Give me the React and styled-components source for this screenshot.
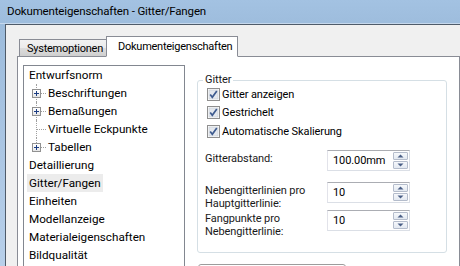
import React from 'react';
import styled, { createGlobalStyle } from 'styled-components';

const GlobalStyle = createGlobalStyle`
  *, *::before, *::after {
    box-sizing: border-box;
  }
  html, body {
    margin: 0;
    padding: 0;
    background: #a4c2e2;
  }
  body {
    font-family: Roboto, "Noto Sans", sans-serif;
    font-size: 11.5px;
    color: #000;
  }
`;

const Window = styled.div`
  display: flex;
  flex-direction: column;
  width: 460px;
  height: 266px;
  overflow: hidden;
  background: linear-gradient(180deg, #a3c2e2 0%, #9dbcdc 10%, #b8d0ea 100%);
`;

const TitleBar = styled.div`
  display: flex;
  align-items: center;
  flex-shrink: 0;
  height: 24px;
  padding: 0 0 1px 7px;
  font-size: 11.5px;
  letter-spacing: -0.15px;
  color: #000;
  border-bottom: 1px solid #c6d8ec;
`;

const Client = styled.div`
  flex: 1;
  display: flex;
  flex-direction: column;
  margin-left: 5px;
  padding: 11px 0 0 11px;
  background: #f0f0f0;
  border-top: 1px solid #4f5b69;
  border-left: 1px solid #4f5b69;
`;

const TabStrip = styled.div`
  display: flex;
  align-items: flex-end;
  padding-left: 2px;
  position: relative;
  z-index: 1;
  margin-bottom: -1px;
`;

const Tab = styled.div`
  display: flex;
  align-items: center;
  width: ${(p) => (p.$active ? '132px' : '88px')};
  height: ${(p) => (p.$active ? '21px' : '18px')};
  padding: ${(p) => (p.$active ? '0 0 0 11px' : '1px 0 0 7px')};
  margin-left: ${(p) => (p.$active ? '-1px' : '0')};
  border: 1px solid #898c95;
  border-bottom: ${(p) => (p.$active ? '1px solid #fff' : '1px solid #898c95')};
  background: ${(p) =>
    p.$active ? '#fff' : 'linear-gradient(180deg, #f2f2f2 0%, #ebebeb 50%, #dddddd 51%, #cfcfcf 100%)'};
  font-size: 11px;
  letter-spacing: -0.25px;
  white-space: nowrap;
`;

const TabPage = styled.div`
  flex: 1;
  display: flex;
  align-items: flex-start;
  background: #fff;
  border: 1px solid #898c95;
  padding: 8px 0 0 5px;
`;

const TreeBox = styled.div`
  width: 162px;
  height: 220px;
  flex-shrink: 0;
  border: 1px solid #828790;
  font-size: 11.7px;
`;

const TreeRow = styled.div`
  position: relative;
  display: flex;
  align-items: center;
  height: 18px;
  padding-left: ${(p) => (p.$child ? '24px' : '5px')};
`;

const TreeLabel = styled.span`
  display: inline-flex;
  align-items: center;
  height: 18px;
  padding: 0 ${(p) => (p.$selected ? '2px' : '0')};
  margin-left: ${(p) => (p.$selected ? '-2px' : '0')};
  background: ${(p) => (p.$selected ? '#ececec' : 'transparent')};
  white-space: nowrap;
`;

const BranchV = styled.span`
  position: absolute;
  left: 12px;
  top: 0;
  height: ${(p) => (p.$last ? '9px' : '18px')};
  border-left: 1px dotted #a0a0a0;
`;

const BranchH = styled.span`
  position: absolute;
  left: 13px;
  top: 9px;
  width: 9px;
  border-top: 1px dotted #a0a0a0;
`;

const Expander = styled.span`
  position: absolute;
  left: 8px;
  top: 5px;
  width: 9px;
  height: 9px;
  border: 1px solid #919191;
  background: linear-gradient(180deg, #ffffff 0%, #e6e6e6 100%);
  display: flex;
  align-items: center;
  justify-content: center;
  &::before,
  &::after {
    content: '';
    position: absolute;
    background: #1c3d82;
  }
  &::before {
    width: 5px;
    height: 1px;
  }
  &::after {
    width: 1px;
    height: 5px;
  }
`;

const Settings = styled.div`
  display: flex;
  flex-direction: column;
  margin-left: 12px;
  padding-top: 10px;
  width: 250px;
  flex-shrink: 0;
  font-size: 11px;
  letter-spacing: -0.1px;
`;

const Group = styled.fieldset`
  margin: 0;
  padding: 0 0 14px 5px;
  border: 1px solid #d5dfe5;
  border-radius: 3px;
  display: flex;
  flex-direction: column;
`;

const Legend = styled.legend`
  padding: 0 2px;
  line-height: 10px;
  color: #1a1a1a;
`;

const CheckRow = styled.label`
  display: flex;
  align-items: center;
  height: 18.5px;
  padding-left: 4px;
  gap: 2px;
`;

const CheckBoxMark = styled.span`
  width: 13px;
  height: 13px;
  flex-shrink: 0;
  display: flex;
`;

const FieldRow = styled.div`
  display: flex;
  align-items: flex-start;
  height: ${(p) => p.$h}px;
  margin-top: ${(p) => p.$mt}px;
  padding-left: 2px;
`;

const FieldLabel = styled.div`
  width: 122px;
  flex-shrink: 0;
  line-height: 13.5px;
  padding-top: 2px;
  color: #1a1a1a;
  white-space: nowrap;
`;

const SpinBox = styled.div`
  display: flex;
  align-items: center;
  justify-content: space-between;
  width: 83px;
  height: 21px;
  border: 1px solid #dbdfe6;
  border-top-color: #abadb3;
  border-left-color: #e2e3ea;
  background: #fff;
  padding: 0 1px 0 5px;
`;

const SpinButtons = styled.div`
  display: flex;
  flex-direction: column;
  gap: 1px;
  width: 15px;
`;

const SpinButton = styled.div`
  height: 8px;
  display: flex;
  align-items: center;
  justify-content: center;
  border: 1px solid #b4bccb;
  border-radius: 1px;
  background: linear-gradient(180deg, #f6f8fb 0%, #e3e9f1 100%);
`;

const BottomBox = styled.div`
  margin-top: 11px;
  margin-left: 1px;
  width: 148px;
  height: 30px;
  border: 1px solid #9c9c9c;
  border-radius: 3px;
  background: #fff;
`;

const Check = () => (
  <CheckBoxMark>
    <svg width="13" height="13" viewBox="0 0 13 13">
      <rect x="0.5" y="0.5" width="12" height="12" fill="#fff" stroke="#8f8f8f" />
      <rect x="2" y="2" width="9" height="9" fill="#e4e8ee" stroke="#c4c9d2" strokeWidth="0.6" />
      <path d="M3.2 6.4 L5.3 9.2 L9.8 2.9" fill="none" stroke="#3e5b8f" strokeWidth="1.7" />
    </svg>
  </CheckBoxMark>
);

const Arrow = ({ up }) => (
  <svg width="7" height="4" viewBox="0 0 7 4">
    <path d={up ? 'M0.5 3.5 L3.5 0.5 L6.5 3.5 Z' : 'M0.5 0.5 L3.5 3.5 L6.5 0.5 Z'} fill="#4a5f86" />
  </svg>
);

const Spin = ({ value }) => (
  <SpinBox>
    <span>{value}</span>
    <SpinButtons>
      <SpinButton>
        <Arrow up />
      </SpinButton>
      <SpinButton>
        <Arrow />
      </SpinButton>
    </SpinButtons>
  </SpinBox>
);

const tree = [
  { label: 'Entwurfsnorm' },
  { label: 'Beschriftungen', child: true, plus: true },
  { label: 'Bemaßungen', child: true, plus: true },
  { label: 'Virtuelle Eckpunkte', child: true },
  { label: 'Tabellen', child: true, plus: true, last: true },
  { label: 'Detaillierung' },
  { label: 'Gitter/Fangen', selected: true },
  { label: 'Einheiten' },
  { label: 'Modellanzeige' },
  { label: 'Materialeigenschaften' },
  { label: 'Bildqualität' },
];

export default function App() {
  return (
    <>
      <GlobalStyle />
      <Window>
        <TitleBar>Dokumenteigenschaften - Gitter/Fangen</TitleBar>
        <Client>
          <TabStrip>
            <Tab>Systemoptionen</Tab>
            <Tab $active>Dokumenteigenschaften</Tab>
          </TabStrip>
          <TabPage>
            <TreeBox>
              {tree.map((item) => (
                <TreeRow key={item.label} $child={item.child}>
                  {item.child && <BranchV $last={item.last} />}
                  {item.child && <BranchH />}
                  {item.plus && <Expander />}
                  <TreeLabel $selected={item.selected}>{item.label}</TreeLabel>
                </TreeRow>
              ))}
            </TreeBox>
            <Settings>
              <Group>
                <Legend>Gitter</Legend>
                <CheckRow>
                  <Check />
                  Gitter anzeigen
                </CheckRow>
                <CheckRow>
                  <Check />
                  Gestrichelt
                </CheckRow>
                <CheckRow>
                  <Check />
                  Automatische Skalierung
                </CheckRow>
                <FieldRow $h={21} $mt={9}>
                  <FieldLabel>Gitterabstand:</FieldLabel>
                  <Spin value="100.00mm" />
                </FieldRow>
                <FieldRow $h={28} $mt={11}>
                  <FieldLabel>
                    Nebengitterlinien pro
                    <br />
                    Hauptgitterlinie:
                  </FieldLabel>
                  <Spin value="10" />
                </FieldRow>
                <FieldRow $h={28} $mt={0}>
                  <FieldLabel>
                    Fangpunkte pro
                    <br />
                    Nebengitterlinie:
                  </FieldLabel>
                  <Spin value="10" />
                </FieldRow>
              </Group>
              <BottomBox />
            </Settings>
          </TabPage>
        </Client>
      </Window>
    </>
  );
}
